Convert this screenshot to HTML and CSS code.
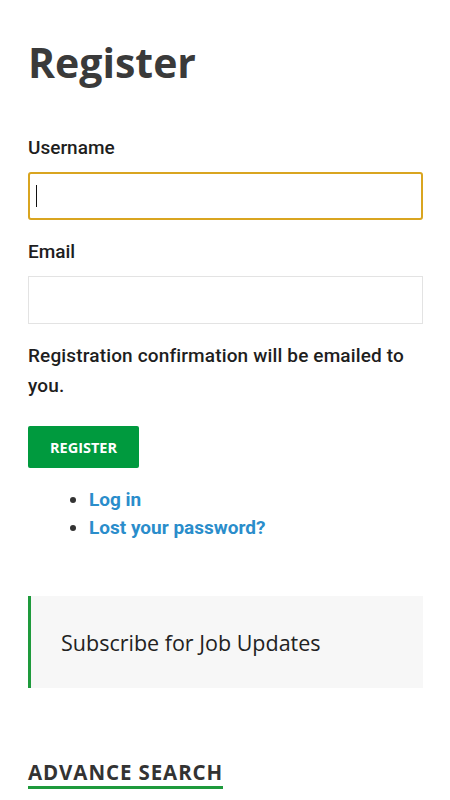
FILE: index.html
```html
<!DOCTYPE html>
<html lang="en">
<head>
<meta charset="utf-8">
<title>Register</title>
<link rel="stylesheet" href="styles.css">
</head>
<body>
<main class="page">
  <h1 class="title">Register</h1>
  <form class="form">
    <div class="field">
      <label class="label" for="user">Username</label>
      <div class="input input-focus"><span class="caret"></span></div>
    </div>
    <div class="field">
      <label class="label" for="email">Email</label>
      <div class="input"></div>
    </div>
    <p class="note">Registration confirmation will be emailed to you.</p>
    <button type="button" class="btn">REGISTER</button>
  </form>
  <ul class="links">
    <li><a href="#">Log in</a></li>
    <li><a href="#">Lost your password?</a></li>
  </ul>
  <div class="subscribe">Subscribe for Job Updates</div>
  <h2 class="section"><span>ADVANCE SEARCH</span></h2>
</main>
</body>
</html>
```
FILE: styles.css
```css
html, body {
  margin: 0;
  padding: 0;
  background: #fff;
}
.page {
  padding: 0 27px 0 28px;
}
.title {
  font-family: "Open Sans", sans-serif;
  font-weight: 700;
  font-size: 41px;
  line-height: 48px;
  color: #3a3a3a;
  margin: 38px 0 0;
}
.form {
  margin-top: 50px;
}
.field {
  margin-bottom: 20px;
}
.label {
  display: block;
  font-family: Roboto, sans-serif;
  font-weight: 500;
  font-size: 19px;
  line-height: 24px;
  color: #1e1e1e;
  margin-bottom: 12px;
}
.input {
  box-sizing: border-box;
  height: 48px;
  border: 1px solid #e3e3e3;
  background: #fff;
  display: flex;
  align-items: center;
  padding-left: 6px;
}
.input-focus {
  border: 2px solid #d9a520;
  border-radius: 3px;
}
.caret {
  width: 1px;
  height: 22px;
  background: #111;
}
.note {
  font-family: Roboto, sans-serif;
  font-weight: 500;
  font-size: 19px;
  line-height: 30px;
  letter-spacing: 0.15px;
  color: #1e1e1e;
  margin: -3px 0 25px;
}
.btn {
  display: block;
  height: 42px;
  width: 111px;
  padding: 0;
  border: none;
  border-radius: 2px;
  background: #009a3e;
  color: #fff;
  font-family: "Open Sans", sans-serif;
  font-weight: 700;
  font-size: 14.5px;
}
.links {
  margin: 18px 0 0;
  padding-left: 61px;
  font-family: Roboto, sans-serif;
  font-weight: 700;
  font-size: 19px;
  line-height: 28px;
  color: #333;
}
.links a {
  color: #2a8dcb;
  text-decoration: none;
}
.subscribe {
  margin-top: 54px;
  height: 92px;
  box-sizing: border-box;
  display: flex;
  align-items: center;
  background: #f7f7f7;
  border-left: 3px solid #1e9a3c;
  padding-left: 30px;
  font-family: "Open Sans", sans-serif;
  font-size: 21.5px;
  color: #222;
}
.section {
  margin: 71px 0 0;
  font-family: "Open Sans", sans-serif;
  font-weight: 700;
  font-size: 20.5px;
  line-height: 26px;
  letter-spacing: 0.9px;
  color: #333;
}
.section span {
  display: inline-block;
  padding-bottom: 1px;
  border-bottom: 3px solid #1e9a3c;
}
```
